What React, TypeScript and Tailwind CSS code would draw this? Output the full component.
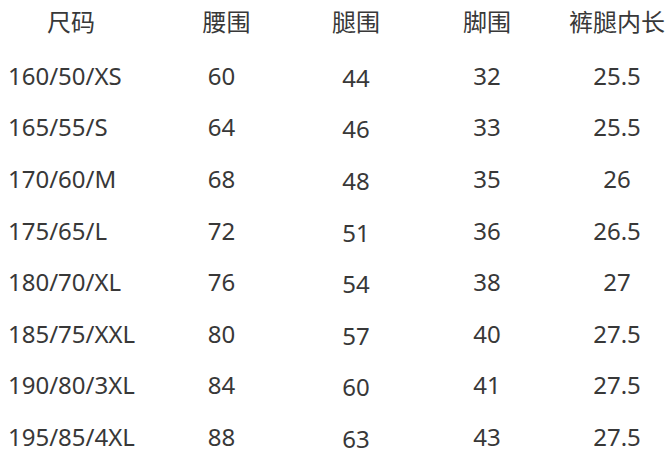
const headers = ['尺码', '腰围', '腿围', '脚围', '裤腿内长'];

const rows = [
  ['160/50/XS', '60', '44', '32', '25.5'],
  ['165/55/S', '64', '46', '33', '25.5'],
  ['170/60/M', '68', '48', '35', '26'],
  ['175/65/L', '72', '51', '36', '26.5'],
  ['180/70/XL', '76', '54', '38', '27'],
  ['185/75/XXL', '80', '57', '40', '27.5'],
  ['190/80/3XL', '84', '60', '41', '27.5'],
  ['195/85/4XL', '88', '63', '43', '27.5'],
];

// column widths chosen so each column's centre sits where the chart puts it
const grid = 'grid grid-cols-[134px_175px_94px_168px_92px]';

export default function App() {
  return (
    <div className="w-[672px] h-[456px] bg-white text-[#383838] font-['Noto_Sans','Noto_Sans_CJK_SC',sans-serif] text-[24px] overflow-hidden">
      <div className={`${grid} h-[50px] pb-[6px] items-center`}>
        <div className="flex justify-center pl-[8px]">{headers[0]}</div>
        <div className="flex justify-center pl-[10px]">{headers[1]}</div>
        <div className="flex justify-center">{headers[2]}</div>
        <div className="flex justify-center">{headers[3]}</div>
        <div className="flex justify-center whitespace-nowrap">{headers[4]}</div>
      </div>
      {rows.map((r) => (
        <div key={r[0]} className={`${grid} h-[51.6px] items-center`}>
          <div className="pl-2 whitespace-nowrap">{r[0]}</div>
          <div className="flex justify-center">{r[1]}</div>
          <div className="flex justify-center pt-[4px]">{r[2]}</div>
          <div className="flex justify-center">{r[3]}</div>
          <div className="flex justify-center">{r[4]}</div>
        </div>
      ))}
    </div>
  );
}
